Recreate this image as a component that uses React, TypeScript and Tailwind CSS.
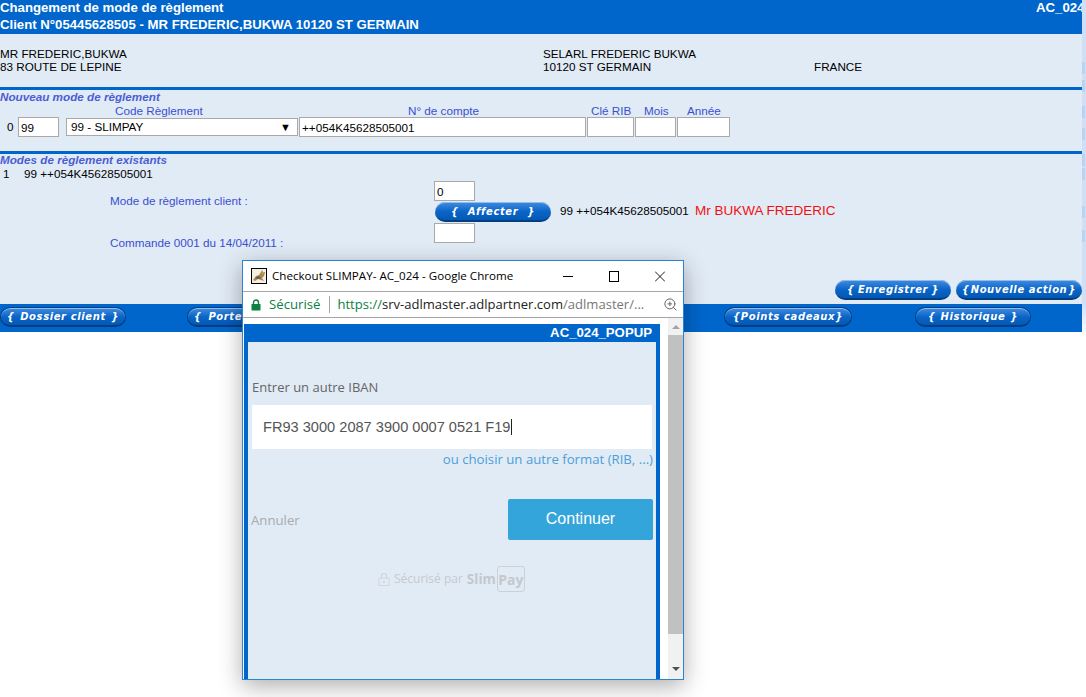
import React from "react";
import { ZoomIn } from "lucide-react";

const arial = "font-['Liberation_Sans',Arial,sans-serif]";
const open = "font-['Open_Sans','Noto_Sans',sans-serif]";

function PillButton({ label, className }: { label: string; className: string }) {
  return (
    <div
      className={`flex h-[20px] items-center justify-between rounded-full border-b-2 border-[#033f80] bg-gradient-to-b from-[#3f8de0] via-[#0a66c8] to-[#0458b4] font-['DejaVu_Sans',sans-serif] text-[10px] font-bold italic tracking-[0.6px] whitespace-nowrap text-white shadow-[inset_0_1px_0_#8fbdf0] ${className}`}
    >
      <span>{"{"}</span>
      <span>{label}</span>
      <span>{"}"}</span>
    </div>
  );
}

function Box({ value, className }: { value?: string; className: string }) {
  return (
    <input
      readOnly
      value={value ?? ""}
      className={`block h-[20px] border border-[#a9a9a9] bg-white px-[2px] text-[11.7px] text-black outline-none ${className}`}
    />
  );
}

function Tomcat() {
  return (
    <svg width="16" height="16" viewBox="0 0 16 16" className="shrink-0">
      <rect x="0.5" y="0.5" width="15" height="15" fill="#f4efe3" stroke="#000" />
      <path d="M2 12 L5 8 L8 7 L10 4 L11 2 L12 4 L14 4 L13 8 L11 10 L13 13 L10 12 L7 11 L4 13 Z" fill="#a98a5a" />
      <path d="M4 10 L8 8 L10 10 L7 11 Z" fill="#6e5a3c" />
      <path d="M11 4 L13 4 L12.5 6 L11 6 Z" fill="#d8a040" />
    </svg>
  );
}

function Popup() {
  return (
    <div className="absolute top-[260px] left-[242px] flex h-[420px] w-[442px] flex-col border border-[#2a84d2] bg-white shadow-[0_6px_22px_rgba(0,0,0,0.32)]">
      <div className={`flex h-[30px] shrink-0 items-center ${open} text-[11.6px] text-black`}>
        <div className="ml-[8px]"><Tomcat /></div>
        <span className="ml-[5px] whitespace-nowrap">Checkout SLIMPAY- AC_024 - Google Chrome</span>
        <div className="ml-auto flex items-center gap-[36px] pr-[18px]">
          <svg width="10" height="11" viewBox="0 0 10 11"><path d="M0 5.5H10" stroke="#000" /></svg>
          <svg width="10" height="11" viewBox="0 0 10 11"><rect x="0.5" y="0.5" width="9" height="10" fill="none" stroke="#000" /></svg>
          <svg width="10" height="11" viewBox="0 0 10 11"><path d="M0 0.5L10 10.5M10 0.5L0 10.5" stroke="#000" strokeWidth="0.9" /></svg>
        </div>
      </div>
      <div className={`flex h-[27px] shrink-0 items-center border-y border-[#a6a6a6] ${open} text-[13.05px]`}>
        <svg width="10" height="12" viewBox="0 0 10 12" className="ml-[8px] shrink-0">
          <path d="M2.5 5.5V3.5a2.5 2.5 0 0 1 5 0V5.5" fill="none" stroke="#0b8043" strokeWidth="1.4" />
          <rect x="0.5" y="5" width="9" height="6.5" rx="0.5" fill="#0b8043" />
        </svg>
        <span className="ml-[8px] text-[13.2px] text-[#0b8043]">Sécurisé</span>
        <span className="ml-[9px] h-[17px] w-px bg-[#a6a6a6]" />
        <span className="ml-[7px] whitespace-nowrap">
          <span className="text-[#0b8043]">https://</span>
          <span className="text-[#222]">srv-adlmaster.adlpartner.com</span>
          <span className="text-[#777]">/adlmaster/...</span>
        </span>
        <ZoomIn className="ml-auto mr-[5px] h-[15px] w-[15px] shrink-0 text-[#666]" strokeWidth={1.6} />
      </div>
      <div className="flex min-h-0 flex-1">
        <div className="flex w-[425px] shrink-0 flex-col pt-[6px] pl-[1px] pr-[8px]">
          <div className={`flex h-[18px] shrink-0 items-center justify-end bg-[#0066cc] pr-[8px] ${arial} text-[13.2px] font-bold text-white`}>
            AC_024_POPUP
          </div>
          <div className="flex flex-1 flex-col border-x-4 border-[#0066cc] bg-[#e1ebf6]">
            <div className={`mt-[36px] pl-[4px] ${open} text-[13px] leading-[18px] text-[#666]`}>Entrer un autre IBAN</div>
            <div className="mx-[4px] mt-[9px] flex h-[44px] items-center bg-white pl-[11px]">
              <span className={`${arial} border-r border-[#222] text-[14.6px] leading-[16px] text-[#555]`}>FR93 3000 2087 3900 0007 0521 F19</span>
            </div>
            <div className={`mt-[1px] pr-[3px] text-right ${open} text-[13.2px] leading-[18px] text-[#4c9fd8]`}>ou choisir un autre format (RIB, ...)</div>
            <div className="mt-[31px] flex items-center justify-between pl-[3px] pr-[3px]">
              <span className={`${open} mt-[2px] text-[13.2px] text-[#aaa]`}>Annuler</span>
              <div className={`flex h-[41px] w-[145px] items-center justify-center rounded-[2px] bg-[#33a5db] pb-[2px] ${arial} text-[16px] text-white`}>Continuer</div>
            </div>
            <div className="mt-[26px] ml-[130px] flex items-center">
              <svg width="12" height="14" viewBox="0 0 12 14">
                <path d="M3.5 6V4a2.5 2.5 0 0 1 5 0V6" fill="none" stroke="#d2d6da" strokeWidth="1.2" />
                <rect x="1" y="6" width="10" height="7.5" fill="none" stroke="#d2d6da" />
                <rect x="5" y="9" width="2" height="2" fill="#d2d6da" />
              </svg>
              <span className={`${open} ml-[4px] text-[12px] text-[#c5cacf]`}>Sécurisé par</span>
              <span className={`${open} ml-[4px] text-[13.5px] font-bold text-[#c4c8cc]`}>Slim</span>
              <span className={`${open} ml-[1px] flex h-[26px] w-[28px] items-center justify-center rounded-[3px] border border-[#cdd1d5] text-[14px] font-bold text-[#c4c8cc]`}>Pay</span>
            </div>
          </div>
        </div>
        <div className="flex w-[15px] flex-col items-center bg-[#f1f1f1]">
          <div className="flex h-[17px] w-full items-center justify-center">
            <div className="h-0 w-0 border-x-[4px] border-b-[4px] border-x-transparent border-b-[#a3a3a3]" />
          </div>
          <div className="h-[299px] w-full bg-[#c1c1c1]" />
          <div className="flex w-full flex-1 items-end justify-center pb-[8px]">
            <div className="h-0 w-0 border-x-[4px] border-t-[4px] border-x-transparent border-t-[#505050]" />
          </div>
        </div>
      </div>
    </div>
  );
}

function Strip() {
  const marks = ["mt-[62px]", "mt-[6px]", "mt-[14px]", "mt-[10px]", "mt-[14px]", "mt-[2px]", "mt-[26px]", "mt-[12px]"];
  return (
    <div className="flex h-[336px] w-[4px] shrink-0 flex-col bg-gradient-to-b from-[#cfe0f6] from-90% to-white">
      {marks.map((m, i) => (
        <div key={i} className={`h-[12px] w-[3px] bg-[#b9d4f3] ${m}`} />
      ))}
    </div>
  );
}

export default function App() {
  return (
    <div className={`relative flex h-[697px] w-[1086px] overflow-hidden bg-white ${arial} text-[11.7px] text-black`}>
      <div className="w-[1082px] shrink-0">
        <div className="flex h-[34px] justify-between overflow-hidden bg-[#0066cc] text-[13.2px] leading-[17px] font-bold text-white">
          <div className="-mt-px">
            <div>Changement de mode de règlement</div>
            <div>Client N°05445628505 - MR FREDERIC,BUKWA 10120 ST GERMAIN</div>
          </div>
          <div className="-mt-px w-[46px] overflow-hidden whitespace-nowrap">AC_024</div>
        </div>

        <div className="flex h-[56px] border-b-[3px] border-[#0066cc] bg-[#e1ebf6] pt-[13px] leading-[13px]">
          <div className="w-[543px]">
            <div>MR FREDERIC,BUKWA</div>
            <div>83 ROUTE DE LEPINE</div>
          </div>
          <div className="w-[271px]">
            <div>SELARL FREDERIC BUKWA</div>
            <div>10120 ST GERMAIN</div>
          </div>
          <div className="pt-[13px]">FRANCE</div>
        </div>

        <div className="h-[64px] border-b-[3px] border-[#0066cc] bg-[#e1ebf6] text-[#3a4fd0]">
          <div className="leading-[13px] font-bold italic opacity-90">Nouveau mode de règlement</div>
          <div className="flex h-[14px] pt-[1px] leading-[14px]">
            <span className="ml-[115px] w-[293px]">Code Règlement</span>
            <span className="w-[183px]">N° de compte</span>
            <span className="w-[53px]">Clé RIB</span>
            <span className="w-[43px]">Mois</span>
            <span>Année</span>
          </div>
          <div className="flex items-center text-black">
            <span className="ml-[7px] w-[11px]">0</span>
            <Box value="99" className="w-[41px]" />
            <div className="relative ml-[7px] flex h-[18px] w-[232px] items-center border border-[#a9a9a9] bg-white pl-[4px]">
              99 - SLIMPAY
              <span className="absolute right-[6px] text-[11px] leading-[11px]">▼</span>
            </div>
            <Box value="++054K45628505001" className="ml-[1px] w-[287px]" />
            <Box className="ml-[1px] w-[47px]" />
            <Box className="ml-[1px] w-[41px]" />
            <Box className="ml-[1px] w-[53px]" />
          </div>
        </div>

        <div className="flex h-[150px] flex-col bg-[#e1ebf6]">
          <div className="-mt-px leading-[13px] font-bold italic text-[#3a4fd0] opacity-90">Modes de règlement existants</div>
          <div className="mt-px flex h-[14px] leading-[14px]">
            <span className="ml-[3px] w-[21px]">1</span>
            <span>99 ++054K45628505001</span>
          </div>
          <div className="flex pt-[2px]">
            <div className="w-[434px] shrink-0 pl-[110px] pt-[11px] text-[#3a4fd0]">
              <div className="leading-[14px]">Mode de règlement client :</div>
              <div className="mt-[28px] leading-[14px]">Commande 0001 du 14/04/2011 :</div>
            </div>
            <div className="-mt-[2px] flex flex-col">
              <Box value="0" className="w-[41px]" />
              <PillButton label="Affecter" className="ml-[1px] mt-[1px] w-[116px] px-[16px]" />
              <Box className="mt-[1px] w-[41px]" />
            </div>
            <div className="ml-[9px] mt-[18px] flex h-[20px] items-center self-start">
              <span className="w-[135px] whitespace-nowrap">99 ++054K45628505001</span>
              <span className="text-[13.5px] text-[#f01010]">Mr BUKWA FREDERIC</span>
            </div>
          </div>
          <div className="mt-[30px] flex justify-end gap-[5px]">
            <PillButton label="Enregistrer" className="w-[116px] px-[12px]" />
            <PillButton label="Nouvelle action" className="w-[126px] px-[6px]" />
          </div>
        </div>

        <div className="flex h-[28px] items-center bg-[#0066cc] pb-[2px]">
          <PillButton label="Dossier client" className="w-[126px] border border-[#6aa6e6] px-[6px]" />
          <PillButton label="Portefeuille" className="ml-[61px] w-[126px] border border-[#6aa6e6] pl-[6px] pr-[16px]" />
          <div className="w-[411px]" />
          <PillButton label="Points cadeaux" className="w-[128px] border border-[#6aa6e6] px-[8px]" />
          <PillButton label="Historique" className="ml-[63px] w-[116px] border border-[#6aa6e6] px-[12px]" />
        </div>
      </div>
      <Strip />
      <Popup />
    </div>
  );
}
